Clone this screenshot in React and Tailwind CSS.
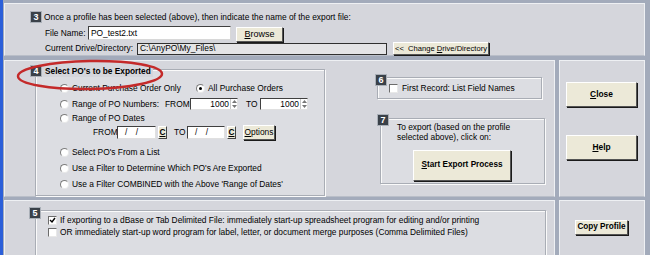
import React from "react";

const Badge = ({ n }) => (
  <div className="w-[12px] h-[12px] bg-[#3a4149] border border-[#aab0b8] text-white text-[9px] font-bold flex items-center justify-center leading-none">
    {n}
  </div>
);

const Btn = ({ children, className = "" }) => (
  <button
    className={`bg-[#ece9d8] border border-t-white border-l-white border-r-[#555] border-b-[#555] shadow-[1px_1px_0_#1a1a1a] text-black flex items-center justify-center leading-none whitespace-nowrap ${className}`}
  >
    {children}
  </button>
);

const Radio = ({ on }) => (
  <span className="w-[9px] h-[9px] rounded-full bg-white border border-t-[#7c7c7c] border-l-[#7c7c7c] border-r-[#e8e8e8] border-b-[#e8e8e8] flex items-center justify-center shrink-0">
    {on && <span className="w-[3px] h-[3px] rounded-full bg-black" />}
  </span>
);

const Check = ({ on }) => (
  <span className="w-[9px] h-[9px] bg-white border border-t-[#6c6c6c] border-l-[#6c6c6c] border-r-[#e8e8e8] border-b-[#e8e8e8] flex items-center justify-center shrink-0">
    {on && (
      <svg width="7" height="7" viewBox="0 0 7 7">
        <path d="M1 3 L3 5 L6 1" stroke="#000" strokeWidth="1.4" fill="none" />
      </svg>
    )}
  </span>
);

const Spin = () => (
  <span className="flex flex-col justify-center items-center w-[7px] h-full border-l border-[#c8c8c8] gap-[2px]">
    <svg width="5" height="3" viewBox="0 0 5 3"><path d="M0 3 L2.5 0 L5 3Z" fill="#777" /></svg>
    <svg width="5" height="3" viewBox="0 0 5 3"><path d="M0 0 L2.5 3 L5 0Z" fill="#777" /></svg>
  </span>
);

const NumBox = () => (
  <div className="w-[48px] h-[12px] bg-white border border-t-[#404040] border-l-[#404040] border-r-[#e0e0e0] border-b-[#e0e0e0] flex items-center">
    <span className="flex-1 text-right pr-[1px]">1000</span>
    <Spin />
  </div>
);

const DateBox = ({ w }) => (
  <div className={`${w} h-[13px] bg-white border border-t-[#404040] border-l-[#404040] border-r-[#e0e0e0] border-b-[#e0e0e0] flex items-center pl-[7px] tracking-[3px]`}>
    / /
  </div>
);

const CBtn = () => (
  <div className="w-[9px] h-[13px] bg-[#ece9d8] border border-t-white border-l-white border-r-[#444] border-b-[#444] flex items-center justify-center font-bold underline">
    C
  </div>
);

const panel = "bg-[#d5d6dc] border border-t-[#eef0f3] border-l-[#eef0f3] border-r-[#eef0f3] border-b-[#b9bec8]";
const box = "bg-[#dcdde2] border border-[#a9adb5] shadow-[inset_1px_1px_0_#fafafa,1px_1px_0_#fafafa]";

export default function App() {
  return (
    <div className="w-[650px] h-[255px] overflow-hidden bg-[#a3abbb] flex text-[8.4px] text-black whitespace-nowrap font-['Liberation_Sans',Arial,sans-serif] relative">
      <div className="w-[3px] bg-[#2b5fd9]" />
      <div className="flex-1 flex flex-col pl-[1px] pr-[5px] pt-[3px]">
        {/* section 3 */}
        <div className={`${panel} h-[59px] pl-[25px] pt-[7px]`}>
          <div className="flex items-center h-[12px] gap-[2px]">
            <Badge n="3" />
            <span>Once a profile has been selected (above), then indicate the name of the export file:</span>
          </div>
          <div className="flex items-center h-[16px] mt-[2px] pl-[15px]">
            <span className="w-[43px]">File Name:</span>
            <div className="w-[143px] h-[14px] bg-white border border-t-[#404040] border-l-[#404040] border-r-[#d8d8d8] border-b-[#d8d8d8] flex items-center pl-[2px]">
              PO_test2.txt
            </div>
            <Btn className="w-[47px] h-[15px] ml-[5px] mt-[2px] text-[9px]">
              <span><u>B</u>rowse</span>
            </Btn>
          </div>
          <div className="flex items-center h-[13px] mt-[1px] pl-[15px]">
            <span className="w-[92px]">Current Drive/Directory:</span>
            <div className="w-[250px] h-[12px] bg-[#e4e4e6] border border-[#303030] flex items-center pl-[2px]">
              C:\AnyPO\My_Files\
            </div>
            <Btn className="w-[96px] h-[13px] ml-[6px] text-[7.6px]">
              <span>&lt;&lt;&nbsp; Change <u>D</u>rive/Directory</span>
            </Btn>
          </div>
        </div>

        {/* middle */}
        <div className="flex h-[141px] mt-[4px] gap-[4px]">
          <div className={`${panel} flex-1 flex pl-[30px] pt-[8px]`}>
            <div className={`${box} relative w-[290px] h-[127px]`}>
              <div className="absolute -left-[6px] -top-[5px] flex items-center gap-[3px] bg-[#d5d6dc] pr-[2px]">
                <Badge n="4" />
                <span className="font-bold text-[8.3px]">Select PO's to be Exported</span>
              </div>
              <div className="flex flex-col pl-[24px] pt-[10px]">
                <div className="flex items-center h-[16px]">
                  <Radio />
                  <span className="w-[124px] ml-[3px]">Current Purchase Order Only</span>
                  <Radio on />
                  <span className="ml-[3px]">All Purchase Orders</span>
                </div>
                <div className="flex items-center h-[16px]">
                  <Radio />
                  <span className="w-[93px] ml-[3px]">Range of PO Numbers:</span>
                  <span className="w-[25px]">FROM</span>
                  <NumBox />
                  <span className="w-[14px] ml-[8px]">TO</span>
                  <NumBox />
                </div>
                <div className="flex items-center h-[13px]">
                  <Radio />
                  <span className="ml-[3px]">Range of PO Dates</span>
                </div>
                <div className="flex items-center h-[15px] pl-[33px]">
                  <span className="w-[24px]">FROM</span>
                  <DateBox w="w-[39px]" />
                  <span className="ml-[2px]"><CBtn /></span>
                  <span className="w-[13px] ml-[7px]">TO</span>
                  <DateBox w="w-[38px]" />
                  <span className="ml-[2px]"><CBtn /></span>
                  <Btn className="w-[32px] h-[15px] ml-[7px]">
                    <span><u>O</u>ptions</span>
                  </Btn>
                </div>
                <div className="h-[4px]" />
                <div className="flex items-center h-[16px]">
                  <Radio />
                  <span className="ml-[3px]">Select PO's From a List</span>
                </div>
                <div className="flex items-center h-[16px]">
                  <Radio />
                  <span className="ml-[3px]">Use a Filter to Determine Which PO's Are Exported</span>
                </div>
                <div className="flex items-center h-[16px]">
                  <Radio />
                  <span className="ml-[3px]">Use a Filter COMBINED with the Above 'Range of Dates'</span>
                </div>
              </div>
            </div>

            <div className="flex flex-col ml-[52px] pt-[8px]">
              <div className={`${box} relative w-[165px] h-[22px] flex items-center pl-[11px]`}>
                <div className="absolute -left-[3px] -top-[4px]">
                  <Badge n="6" />
                </div>
                <Check />
                <span className="ml-[4px]">First Record: List Field Names</span>
              </div>
              <div className={`${box} relative w-[165px] h-[66px] ml-[3px] mt-[19px] pl-[16px] pt-[3px]`}>
                <div className="absolute -left-[4px] -top-[5px]">
                  <Badge n="7" />
                </div>
                <div className="leading-[10px]">
                  To export (based on the profile<br />selected above), click on:
                </div>
                <Btn className="w-[98px] h-[31px] ml-[16px] mt-[8px] font-bold text-[8.2px]">
                  <span><u>S</u>tart Export Process</span>
                </Btn>
              </div>
            </div>
          </div>
          <div className={`${panel} w-[86px] pl-[6px] pt-[21px]`}>
            <Btn className="w-[71px] h-[25px] font-bold text-[8.4px]">
              <span><u>C</u>lose</span>
            </Btn>
            <Btn className="w-[71px] h-[25px] mt-[28px] font-bold text-[8.4px]">
              <span><u>H</u>elp</span>
            </Btn>
          </div>
        </div>

        {/* section 5 */}
        <div className="flex flex-1 mt-[3px] gap-[4px]">
          <div className={`${panel} flex-1 pl-[30px] pt-[9px]`}>
            <div className={`${box} relative w-[511px] h-[60px] pl-[12px] pt-[3px]`}>
              <div className="absolute -left-[7px] -top-[4px]">
                <Badge n="5" />
              </div>
              <div className="flex items-center h-[12px]">
                <Check on />
                <span className="ml-[3px]">If exporting to a dBase or Tab Delimited File: immediately start-up spreadsheet program for editing and/or printing</span>
              </div>
              <div className="flex items-center h-[12px]">
                <Check />
                <span className="ml-[3px]">OR immediately start-up word program for label, letter, or document merge purposes (Comma Delimited Files)</span>
              </div>
            </div>
          </div>
          <div className={`${panel} w-[86px] pl-[15px] pt-[19px]`}>
            <Btn className="w-[53px] h-[15px] font-bold text-[8.2px]">
              <span>Copy Profile</span>
            </Btn>
          </div>
        </div>
      </div>

      <svg className="absolute left-0 top-0 pointer-events-none" width="650" height="255">
        <ellipse cx="90" cy="75" rx="72" ry="14" fill="none" stroke="#c42a2a" strokeWidth="2.5" transform="rotate(-1 90 75)" />
      </svg>
    </div>
  );
}
